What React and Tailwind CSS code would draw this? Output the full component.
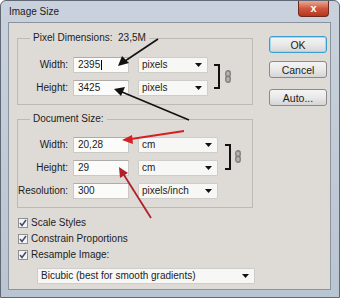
import React from "react";

function Caret() {
  return (
    <svg width="7" height="4" viewBox="0 0 7 4" className="shrink-0">
      <path d="M0 0 H7 L3.5 4 Z" fill="#111" />
    </svg>
  );
}

function Select({ value, w }) {
  return (
    <div className={`${w} h-[16px] flex items-center justify-between pl-[3px] pr-[5px] bg-[#f7f7f6] border border-[#cfcdca] rounded-[1px] shrink-0`}>
      <span>{value}</span>
      <Caret />
    </div>
  );
}

function Input({ value, cursor }) {
  return (
    <div className="w-[56px] h-[16px] flex items-center pl-[4px] bg-[#fbfbfa] border border-[#cbc9c6] border-t-[#aeaca9] shrink-0">
      <span>{value}</span>
      {cursor && <span className="w-px h-[10px] bg-black ml-px" />}
    </div>
  );
}

function Row({ label, value, unit, uw, cursor }) {
  return (
    <div className="flex items-center h-[16px]">
      <div className="w-[55px] text-right pr-[5px] shrink-0">{label}</div>
      <Input value={value} cursor={cursor} />
      <div className="w-[9px] shrink-0" />
      <Select value={unit} w={uw} />
    </div>
  );
}

function Bracket({ h }) {
  return <div className={`${h} w-[6px] border-t-2 border-r-2 border-b-2 border-[#111] shrink-0`} />;
}

function Link() {
  return (
    <svg width="6" height="13" viewBox="0 0 6 13" className="shrink-0">
      <rect x="0.75" y="0.75" width="4.5" height="6" rx="2.2" fill="#b5b3b0" stroke="#7c7c7c" strokeWidth="1.3" />
      <rect x="0.75" y="6.25" width="4.5" height="6" rx="2.2" fill="#b5b3b0" stroke="#7c7c7c" strokeWidth="1.3" />
    </svg>
  );
}

function Check({ label }) {
  return (
    <div className="flex items-center h-[16px] pl-px">
      <div className="w-[10px] h-[10px] bg-[#f4f4f4] border border-[#8e8f8f] flex items-center justify-center shrink-0">
        <svg width="8" height="8" viewBox="0 0 8 8">
          <path d="M1 4 L3 6.5 L7 1" fill="none" stroke="#3d4c6b" strokeWidth="1.5" />
        </svg>
      </div>
      <span className="ml-[3px]">{label}</span>
    </div>
  );
}

function Button({ children, def }) {
  return (
    <div
      className={`w-[58px] h-[17px] flex items-center justify-center rounded-[3px] border ${
        def ? "border-[#3c9dd0] shadow-[inset_0_0_0_1px_#9fd8f0]" : "border-[#8a8a8a]"
      } bg-gradient-to-b from-[#f4f4f4] via-[#e9e9e9] to-[#d5d5d5] text-[10.5px]`}
    >
      {children}
    </div>
  );
}

export default function App() {
  return (
    <div className="relative w-[340px] h-[298px] flex flex-col bg-gradient-to-b from-[#c9d2dc] to-[#bac5d2] border border-[#5f6874] rounded-t-[6px] overflow-hidden font-['Liberation_Sans',Arial,sans-serif] text-[10px] text-[#1c1c1c] leading-[12px]">
      <div className="h-[21px] flex items-start shrink-0">
        <div className="pl-[8px] pt-[5px] text-[10px] text-[#1a1a1a]">Image Size</div>
        <div className="ml-auto mr-[10px] w-[31px] h-[16px] rounded-b-[4px] border border-t-0 border-[#6d2a1f] bg-gradient-to-b from-[#e9a995] via-[#d0563c] to-[#b8351e] flex items-center justify-center">
          <span className="text-white font-bold text-[11px] leading-none">x</span>
        </div>
      </div>

      <div className="flex-1 ml-[7px] mr-[8px] mb-[7px] bg-[#dedbd7] border border-[#8a94a1] flex">
        <div className="pl-[8px] pt-[9px] flex flex-col w-[245px] shrink-0">
          <fieldset className="w-[236px] border border-[#bdbab5] pt-[13px] pb-[8px] px-0">
            <legend className="ml-[12px] px-[3px] leading-[12px]">Pixel Dimensions:&nbsp; 23,5M</legend>
            <div className="flex items-center">
              <div className="flex flex-col gap-[7px]">
                <Row label="Width:" value="2395" unit="pixels" uw="w-[70px]" cursor />
                <Row label="Height:" value="3425" unit="pixels" uw="w-[70px]" />
              </div>
              <div className="ml-[6px]">
                <Bracket h="h-[25px]" />
              </div>
              <div className="ml-[5px]">
                <Link />
              </div>
            </div>
          </fieldset>

          <fieldset className="w-[236px] mt-[8px] border border-[#bdbab5] pt-[12px] pb-[8px] px-0">
            <legend className="ml-[12px] px-[3px] leading-[12px]">Document Size:</legend>
            <div className="flex items-center">
              <div className="flex flex-col gap-[7px]">
                <Row label="Width:" value="20,28" unit="cm" uw="w-[80px]" />
                <Row label="Height:" value="29" unit="cm" uw="w-[80px]" />
              </div>
              <div className="ml-[7px]">
                <Bracket h="h-[26px]" />
              </div>
              <div className="ml-[4px]">
                <Link />
              </div>
            </div>
            <div className="mt-[7px]">
              <Row label="Resolution:" value="300" unit="pixels/inch" uw="w-[80px]" />
            </div>
          </fieldset>

          <div className="mt-[7px] flex flex-col">
            <Check label="Scale Styles" />
            <Check label="Constrain Proportions" />
            <Check label="Resample Image:" />
          </div>
          <div className="mt-[5px] ml-[20px]">
            <Select value="Bicubic (best for smooth gradients)" w="w-[218px]" />
          </div>
        </div>

        <div className="pt-[13px] pl-[15px] flex flex-col">
          <Button def>OK</Button>
          <div className="h-[8px]" />
          <Button>Cancel</Button>
          <div className="h-[11px]" />
          <Button>Auto...</Button>
        </div>
      </div>

      <svg className="absolute inset-0 pointer-events-none" width="340" height="298" viewBox="0 0 340 298">
        <line x1="157" y1="38" x2="124" y2="60" stroke="#111" strokeWidth="1.6" />
        <path d="M117 65 L121 55 L128 62 Z" fill="#111" />
        <line x1="188" y1="119" x2="121" y2="91" stroke="#111" strokeWidth="1.6" />
        <path d="M113 88 L124 86 L120 95 Z" fill="#111" />
        <line x1="183" y1="130" x2="130" y2="138" stroke="#d42020" strokeWidth="1.8" />
        <path d="M121 139 L131 134 L132 143 Z" fill="#d42020" />
        <line x1="150" y1="217" x2="123" y2="174" stroke="#b0202a" strokeWidth="1.8" />
        <path d="M118 166 L127 172 L119 177 Z" fill="#b0202a" />
      </svg>
    </div>
  );
}
